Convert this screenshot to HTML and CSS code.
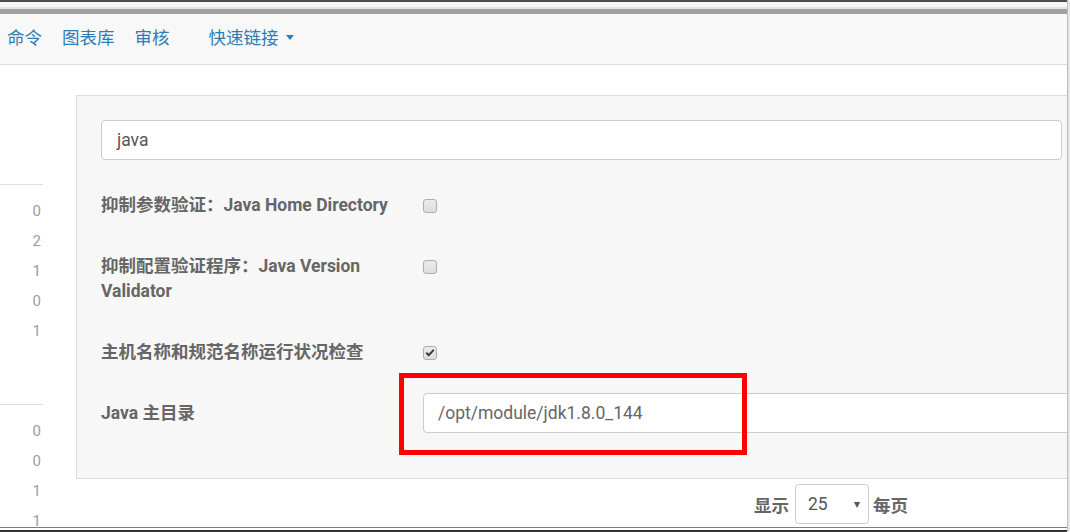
FILE: index.html
```html
<!DOCTYPE html>
<html lang="zh-CN">
<head>
<meta charset="utf-8">
<title>配置</title>
<link rel="stylesheet" href="styles.css">
</head>
<body>
<div class="screen">
  <div class="main">
    <div class="chrome">
      <div class="chrome-dark"></div>
      <div class="chrome-light"></div>
      <div class="chrome-mid"></div>
      <div class="chrome-gray"></div>
    </div>
    <nav class="navbar">
      <a class="nav-item first">命令</a>
      <a class="nav-item">图表库</a>
      <a class="nav-item">审核</a>
      <a class="nav-item wide">快速链接<span class="caret"></span></a>
    </nav>
    <div class="content">
      <aside class="side">
        <div class="side-block block-one">
          <div class="num">0</div>
          <div class="num">2</div>
          <div class="num">1</div>
          <div class="num">0</div>
          <div class="num">1</div>
        </div>
        <div class="side-block block-two">
          <div class="num">0</div>
          <div class="num">0</div>
          <div class="num">1</div>
          <div class="num">1</div>
        </div>
      </aside>
      <section class="config">
        <div class="panel">
          <div class="search">java</div>
          <div class="row row-1">
            <div class="label">抑制参数验证：Java Home Directory</div>
            <div class="control"><span class="checkbox"></span></div>
          </div>
          <div class="row row-2">
            <div class="label">抑制配置验证程序：Java Version Validator</div>
            <div class="control"><span class="checkbox"></span></div>
          </div>
          <div class="row row-3">
            <div class="label">主机名称和规范名称运行状况检查</div>
            <div class="control"><span class="checkbox checked"><svg viewBox="0 0 14 14" width="14" height="14"><path d="M3.2 7.2 L5.6 9.6 L10.8 3.8" fill="none" stroke="#333" stroke-width="2.2" stroke-linecap="round" stroke-linejoin="round"/></svg></span></div>
          </div>
          <div class="row row-4">
            <div class="label">Java 主目录</div>
            <div class="field">/opt/module/jdk1.8.0_144</div>
            <div class="highlight"></div>
          </div>
        </div>
        <div class="pager">
          <span class="pager-label">显示</span>
          <div class="select"><span>25</span><span class="select-arrow">▾</span></div>
          <span class="pager-label">每页</span>
        </div>
      </section>
    </div>
    <div class="bottom-edge">
      <div class="edge-green"></div>
      <div class="edge-white"></div>
      <div class="edge-dark"></div>
    </div>
  </div>
  <div class="right-edge"></div>
</div>
</body>
</html>
```
FILE: styles.css
```css
* { box-sizing: border-box; }
html, body { margin: 0; padding: 0; }
body {
  width: 1070px;
  height: 532px;
  overflow: hidden;
  background: #fff;
  font-family: "Roboto", "Noto Sans CJK SC", sans-serif;
}
.screen { display: flex; width: 1070px; height: 532px; }
.main { width: 1067px; height: 532px; display: flex; flex-direction: column; overflow: hidden; }
.right-edge {
  width: 3px;
  height: 532px;
  border-left: 1px solid #bdbdbd;
  background: #e6e6e6;
}

.chrome-dark { height: 2px; background: #4b4b4b; }
.chrome-light { height: 5px; background: #f6f6f6; }
.chrome-mid { height: 2px; background: #e4e4e4; }
.chrome-gray { height: 5px; background: #a1a1a1; }

.navbar {
  height: 51px;
  background: #f8f8f8;
  border-bottom: 1px solid #dcdcdc;
  display: flex;
  align-items: center;
  padding-bottom: 6px;
  font-family: "Noto Sans CJK SC", sans-serif;
  font-size: 17.5px;
  color: #2e7cb4;
}
.nav-item { margin-left: 20px; display: flex; align-items: center; }
.nav-item.first { margin-left: 7px; }
.nav-item.wide { margin-left: 39px; }
.caret {
  width: 0; height: 0;
  margin-left: 7px;
  margin-top: 2px;
  border-left: 4px solid transparent;
  border-right: 4px solid transparent;
  border-top: 5px solid #2e7cb4;
}

.content { flex: 1; display: flex; overflow: hidden; }

.side { width: 43px; flex: none; }
.side-block { border-top: 1px solid #dedede; padding-top: 11px; }
.block-one { margin-top: 119px; }
.block-two { margin-top: 58px; }
.num {
  height: 30px;
  line-height: 30px;
  text-align: right;
  padding-right: 2px;
  font-size: 15px;
  color: #9c9c9c;
}

.config { margin-left: 33px; flex: none; width: 1011px; }
.panel {
  margin-top: 30px;
  width: 1011px;
  background: #f7f7f7;
  border: 1px solid #dcdcdc;
  padding: 24px 24px 45px;
}
.search {
  height: 40px;
  background: #fff;
  border: 1px solid #cccccc;
  border-radius: 4px;
  padding-left: 15px;
  display: flex;
  align-items: center;
  font-size: 17.5px;
  color: #555;
}
.row { display: flex; align-items: flex-start; position: relative; }
.row-1 { margin-top: 33px; }
.row-2 { margin-top: 36px; }
.row-3 { margin-top: 36px; }
.row-4 { margin-top: 28px; align-items: center; height: 40px; }
.label {
  width: 322px;
  flex: none;
  padding-right: 15px;
  font-size: 17.5px;
  line-height: 25px;
  font-weight: bold;
  color: #666;
}
.control { height: 25px; display: flex; align-items: center; }
.checkbox {
  width: 14px;
  height: 14px;
  border: 1px solid #adadad;
  border-radius: 3px;
  background: linear-gradient(#ececec, #dcdcdc);
  display: flex;
  align-items: center;
  justify-content: center;
}
.checkbox svg { display: block; }
.field {
  flex: 1;
  margin-right: -60px;
  height: 40px;
  background: #fff;
  border: 1px solid #cccccc;
  border-radius: 4px 0 0 4px;
  padding-left: 14px;
  display: flex;
  align-items: center;
  font-size: 17.5px;
  color: #666;
}
.highlight {
  position: absolute;
  left: 298px;
  top: -20px;
  width: 348px;
  height: 82px;
  border: 5px solid #ff0000;
  pointer-events: none;
}

.pager {
  margin-top: 5px;
  margin-left: 678px;
  display: flex;
  align-items: center;
  height: 40px;
}
.pager-label {
  font-family: "Noto Sans CJK SC", sans-serif;
  font-size: 17.5px;
  font-weight: bold;
  color: #666;
}
.select {
  margin: 0 4px 0 6px;
  width: 74px;
  height: 40px;
  border: 1px solid #cccccc;
  border-radius: 4px;
  background: #fff;
  display: flex;
  align-items: center;
  justify-content: space-between;
  padding: 0 8px 0 12px;
  font-size: 17.5px;
  color: #555;
}
.select-arrow { font-size: 12px; color: #555; }

.bottom-edge { flex: none; }
.edge-green { height: 1px; background: #5d8f7e; }
.edge-white { height: 2px; background: #fff; }
.edge-dark { height: 2px; background: #333; }
```
